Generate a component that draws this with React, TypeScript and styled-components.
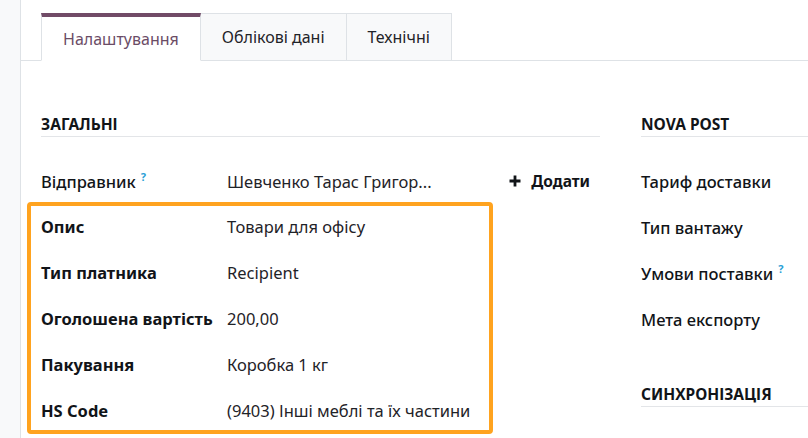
import React from 'react';
import styled, { createGlobalStyle, css } from 'styled-components';

const GlobalStyle = createGlobalStyle`
  html, body {
    margin: 0;
    padding: 0;
    background: #ffffff;
  }
  body {
    font-family: 'Noto Sans', 'Liberation Sans', sans-serif;
    color: #1f2328;
  }
`;

const Page = styled.div`
  display: flex;
  width: 808px;
  height: 438px;
  overflow: hidden;
`;

const SideStrip = styled.div`
  width: 20px;
  flex-shrink: 0;
  background: #f8f9fa;
  border-right: 1px solid #dee2e6;
`;

const Main = styled.div`
  flex: 1;
  padding-top: 13px;
`;

const TabBar = styled.div`
  display: flex;
  height: 47px;
  padding-left: 20px;
  border-bottom: 1px solid #dee2e6;
`;

const Tab = styled.div<{ $active?: boolean }>`
  display: flex;
  align-items: center;
  justify-content: center;
  box-sizing: border-box;
  height: 48px;
  padding: 0 21px;
  font-size: 16px;
  color: #1f2328;
  background: #f8f9fa;
  border: 1px solid #dee2e6;
  border-left: none;
  ${props =>
    props.$active &&
    css`
      background: #ffffff;
      color: #6b4c66;
      border: 1px solid #dee2e6;
      border-top: 4px solid #714b67;
      border-bottom-color: #ffffff;
    `}
`;

const Columns = styled.div`
  display: grid;
  grid-template-columns: 559px 1fr;
  column-gap: 41px;
  padding: 54px 0 0 20px;
`;

const Column = styled.div`
  display: flex;
  flex-direction: column;
`;

const SectionTitle = styled.div<{ $spaced?: boolean }>`
  font-size: 15.5px;
  line-height: 18px;
  font-weight: 700;
  color: #111418;
  text-transform: uppercase;
  padding-bottom: 3px;
  border-bottom: 1px solid #e3e5e8;
  margin-bottom: 24px;
  ${props =>
    props.$spaced &&
    css`
      margin-top: 46px;
    `}
`;

const RowList = styled.div`
  display: flex;
  flex-direction: column;
  gap: 6px;
`;

const Row = styled.div`
  display: flex;
  align-items: center;
  height: 40px;
  font-size: 16.5px;
`;

const Label = styled.div<{ $strong?: boolean }>`
  width: 186px;
  flex-shrink: 0;
  font-weight: ${props => (props.$strong ? 700 : 500)};
  color: #111418;
  white-space: nowrap;
`;

const Help = styled.sup`
  color: #2a9fd6;
  font-size: 11px;
  font-weight: 700;
  margin-left: 5px;
  vertical-align: 7px;
`;

const Value = styled.div`
  color: #1f2328;
  white-space: nowrap;
`;

const AddButton = styled.div`
  display: flex;
  align-items: center;
  gap: 10px;
  margin-left: auto;
  margin-right: 10px;
  font-weight: 700;
  font-size: 15.5px;
  color: #111418;
`;

const Highlight = styled.div`
  box-sizing: border-box;
  width: 466px;
  margin: 1px 0 0 -14px;
  padding: 0 10px;
  border: 4px solid #ffa31f;
  border-radius: 4px;
`;

const boxRows = [
  { label: 'Опис', value: 'Товари для офісу' },
  { label: 'Тип платника', value: 'Recipient' },
  { label: 'Оголошена вартість', value: '200,00' },
  { label: 'Пакування', value: 'Коробка 1 кг' },
  { label: 'HS Code', value: '(9403) Інші меблі та їх частини' },
];

const rightRows = [
  { label: 'Тариф доставки' },
  { label: 'Тип вантажу' },
  { label: 'Умови поставки', help: true },
  { label: 'Мета експорту' },
];

const PlusIcon = () => (
  <svg width="12" height="12" viewBox="0 0 12 12">
    <path d="M6 0.5v11M0.5 6h11" stroke="#111418" strokeWidth="2.8" />
  </svg>
);

export default function App() {
  return (
    <>
      <GlobalStyle />
      <Page>
        <SideStrip />
        <Main>
          <TabBar>
            <Tab $active>Налаштування</Tab>
            <Tab>Облікові дані</Tab>
            <Tab>Технічні</Tab>
          </TabBar>
          <Columns>
            <Column>
              <SectionTitle>Загальні</SectionTitle>
              <Row>
                <Label>
                  Відправник<Help>?</Help>
                </Label>
                <Value>Шевченко Тарас Григор...</Value>
                <AddButton>
                  <PlusIcon />
                  Додати
                </AddButton>
              </Row>
              <Highlight>
                <RowList>
                  {boxRows.map(r => (
                    <Row key={r.label}>
                      <Label $strong>{r.label}</Label>
                      <Value>{r.value}</Value>
                    </Row>
                  ))}
                </RowList>
              </Highlight>
            </Column>
            <Column>
              <SectionTitle>Nova Post</SectionTitle>
              <RowList>
                {rightRows.map(r => (
                  <Row key={r.label}>
                    <Label>
                      {r.label}
                      {r.help && <Help>?</Help>}
                    </Label>
                  </Row>
                ))}
              </RowList>
              <SectionTitle $spaced>Синхронізація</SectionTitle>
            </Column>
          </Columns>
        </Main>
      </Page>
    </>
  );
}
